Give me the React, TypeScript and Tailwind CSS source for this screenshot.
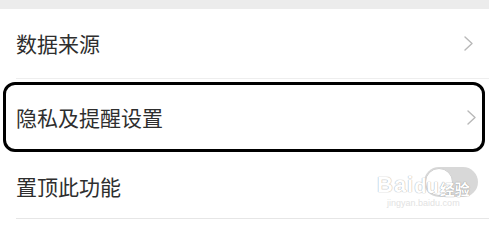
import React from 'react';

const cjk = { fontFamily: '"Noto Sans CJK SC", "Noto Sans", sans-serif' };

function Chevron() {
  return (
    <svg width="9" height="15" viewBox="0 0 9 15" fill="none" className="shrink-0">
      <polyline points="1,1 8,7.5 1,14" stroke="#b8b8b8" strokeWidth="1.4" strokeLinejoin="round" strokeLinecap="round" />
    </svg>
  );
}

function Toggle() {
  return (
    <div className="relative h-[30px] w-[54px] shrink-0 rounded-full bg-[#d8d8d8]">
      <div className="absolute left-[1px] top-[1px] h-[28px] w-[28px] rounded-full border border-[#cfcfcf] bg-white" />
    </div>
  );
}

export default function App() {
  return (
    <div className="w-[489px] h-[227px] overflow-hidden bg-white text-[#2e2e2e]" style={cjk}>
      <div className="h-[9px] bg-[#ececec]" />

      <div className="flex h-[69px] items-center justify-between pl-4 pr-[16px]">
        <span className="text-[21px] leading-none">数据来源</span>
        <Chevron />
      </div>
      <div className="ml-4 h-px bg-[#eeeeee]" />

      {/* 高亮框 */}
      <div className="ml-[3px] mr-[4px] mt-[3px] flex h-[70px] items-center justify-between rounded-[12px] border-[3px] border-black pl-[10px] pr-[6px]">
        <span className="text-[21px] leading-none">隐私及提醒设置</span>
        <Chevron />
      </div>

      <div className="relative flex h-[66px] items-center justify-between pl-4 pr-[11px]">
        <span className="mt-[2px] text-[21px] leading-none">置顶此功能</span>
        <div className="-mt-[6px]">
          <Toggle />
        </div>
        {/* 水印 */}
        <div className="pointer-events-none absolute left-[377px] top-[22px] flex flex-col items-center">
          <div className="flex items-end leading-none">
            <span
              className="text-[22px] font-bold tracking-[1px] text-white [text-shadow:0_0_1px_#b4b4b4,0_0_1px_#b4b4b4]"
              style={{ fontFamily: '"Liberation Sans", sans-serif' }}
            >
              Bai
            </span>
            <span
              className="text-[20px] font-bold text-white [text-shadow:0_0_1px_#b4b4b4,0_0_1px_#b4b4b4]"
              style={{ fontFamily: '"Liberation Sans", sans-serif' }}
            >
              du
            </span>
            <span className="ml-[1px] text-[15px] font-bold text-white [text-shadow:0_0_1px_#a0a0a0,0_0_1px_#a0a0a0]">经验</span>
          </div>
          <span
            className="mt-[3px] text-[9px] leading-none text-[#e2e2e2]"
            style={{ fontFamily: '"Liberation Sans", sans-serif' }}
          >
            jingyan.baidu.com
          </span>
        </div>
      </div>
      <div className="ml-4 h-px bg-[#e6e6e6]" />
    </div>
  );
}
